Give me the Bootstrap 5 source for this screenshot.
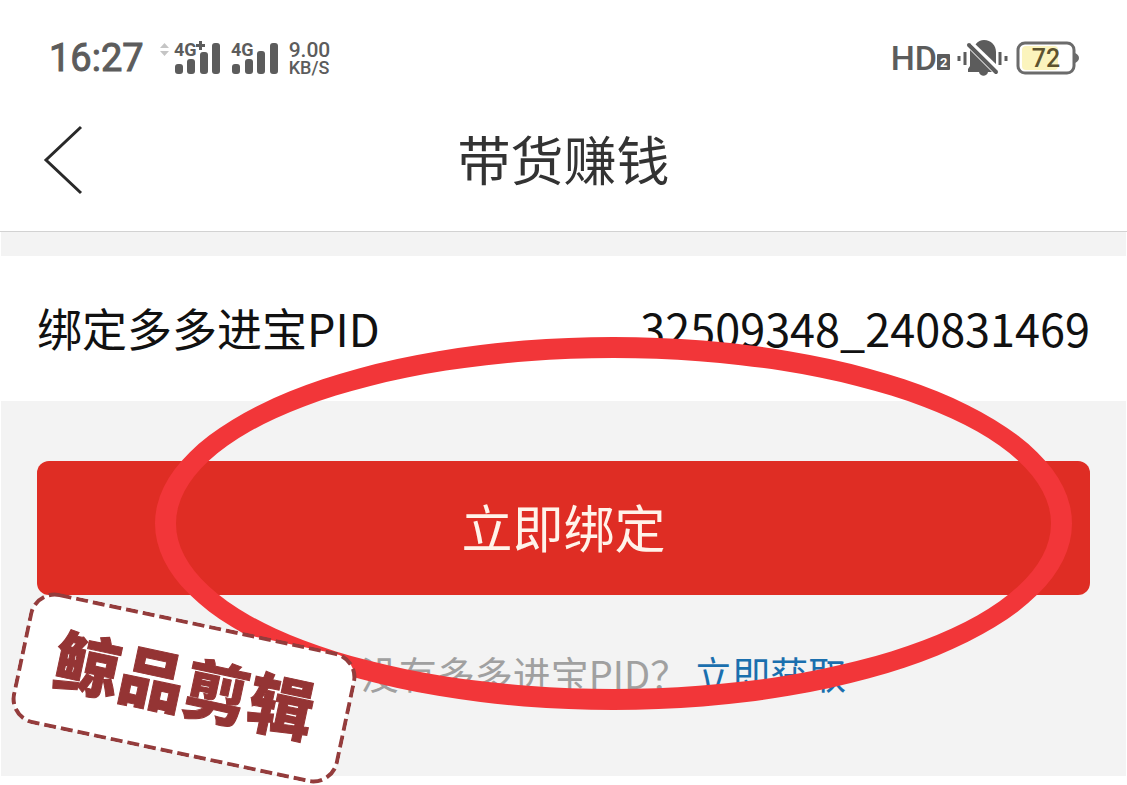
<!DOCTYPE html>
<html lang="zh-CN">
<head>
<meta charset="utf-8">
<meta name="viewport" content="width=device-width, initial-scale=1">
<title>带货赚钱</title>
<link href="https://cdn.jsdelivr.net/npm/bootstrap@5.3.0/dist/css/bootstrap.min.css" rel="stylesheet">
<style>
  body { font-family: "Noto Sans CJK SC", sans-serif; background: #fff; color: #111; }
  .status-bar { font-family: Roboto, sans-serif; color: #5c5c5c; height: 112px; padding: 4px 48px 0 49px; }
  .status-bar svg { overflow: visible; }
  .clock { font-size: 38px; line-height: 44px; -webkit-text-stroke: 1px #5c5c5c; }
  .rate-num { font-size: 21px; line-height: 20px; font-weight: 500; }
  .rate-unit { font-size: 18px; line-height: 16px; font-weight: 500; }
  .hd { font-size: 34px; line-height: 44px; font-weight: 500; }
  .title-bar { height: 120px; padding: 0 40px 24px; border-bottom: 1px solid #d2d2d2; }
  .title-bar h1 { font-size: 53px; line-height: 72px; font-weight: 400; color: #333; padding-bottom: 4px; }
  .back { width: 80px; }
  .sheet { background: #f3f3f3; padding-top: 24px; margin: 0 1px; height: 544px; }
  .pid-row { background: #fff; height: 145px; padding: 0 36px 2px; font-size: 45px; line-height: 60px; }
  .bind-area { padding: 60px 36px 0; }
  .bind-btn { height: 134px; font-size: 51px; padding: 0 0 4px; font-weight: 400; color: #fff3ea; border-radius: 12px; --bs-btn-bg: #df2d24; --bs-btn-hover-bg: #cb261e; --bs-btn-border-width: 0; }
  .hint { font-size: 38px; line-height: 56px; margin-top: 50px; color: #a0a0a0; padding-left: 80px; }
  .hint a { color: #1a6fae; margin-left: 6px; }
  .ring { left: 13.7%; right: 4.8%; top: 105px; height: 373px; border: 21px solid #f23639; border-radius: 50%; pointer-events: none; }
  .stamp { left: 16px; top: 389px; width: 334px; height: 134px; padding-bottom: 12px; transform: rotate(12deg); color: #943434; font-size: 66px; line-height: 80px; font-weight: 900; }
  .stamp span { -webkit-text-stroke: 1px #943434; }
  .stamp svg { inset: 0; }
</style>
</head>
<body class="min-vh-100">
<header>
  <div class="status-bar d-flex align-items-center justify-content-between">
    <div class="d-flex align-items-center">
      <span class="clock">16:27</span>
      <svg class="ms-3 mb-3" width="9" height="14" viewBox="0 0 9 14" aria-hidden="true"><path d="M0 5 4.500 0 9 5ZM0 8H9L4.500 13Z" fill="#c5c5c5"/></svg>
      <svg class="ms-1" width="50" height="36" viewBox="0 0 50 36" fill="#5c5c5c" aria-label="4G+">
        <text x="1" y="16" font-size="18" font-weight="700">4G</text><path d="M26 1h3v3h3v3h-3v3h-3V7h-3V4h3z"/>
        <rect x="2" y="24" width="8" height="10" rx="3"/><rect x="14" y="19" width="8" height="15" rx="3"/><rect x="27" y="12" width="8" height="22" rx="3"/><rect x="39" y="3" width="8" height="31" rx="3"/>
      </svg>
      <svg class="ms-2" width="50" height="36" viewBox="0 0 50 36" fill="#5c5c5c" aria-label="4G">
        <text x="0" y="16" font-size="18" font-weight="700">4G</text>
        <rect x="1" y="24" width="8" height="10" rx="3"/><rect x="14" y="19" width="8" height="15" rx="3"/><rect x="26" y="11" width="8" height="23" rx="3"/><rect x="39" y="3" width="8" height="31" rx="3"/>
      </svg>
      <div class="ms-2"><div class="rate-num">9.00</div><div class="rate-unit">KB/S</div></div>
    </div>
    <div class="d-flex align-items-center">
      <span class="hd">HD</span>
      <svg width="13" height="16" viewBox="0 0 13 16" class="mt-2" aria-hidden="true"><rect width="13" height="16" rx="1" fill="#5c5c5c"/><text x="3" y="13" font-size="13" font-weight="700" fill="#fff">2</text></svg>
      <svg class="ms-2" width="50" height="38" viewBox="0 0 50 38" fill="#5c5c5c" aria-label="静音">
        <path d="M17 6C20 2 23 1 26 1c7 0 12 5 12 12v14ZM12 11 34 33H30c-1 5-8 5-9 0H10V30l2-3Z"/>
        <path d="m11 6 27 27" fill="none" stroke="#5c5c5c" stroke-width="4" stroke-linecap="round"/>
        <path d="m14 4 26 25" fill="none" stroke="#fff" stroke-width="3"/>
        <path d="M1 17v5M7 13v13M42 13v13M48 17v5" fill="none" stroke="#5c5c5c" stroke-width="3"/>
      </svg>
      <svg class="ms-2" width="63" height="34" viewBox="0 0 63 34" aria-label="72%"><rect x="2" y="2" width="56" height="30" rx="7" fill="#fff" stroke="#6b6b6b" stroke-width="3"/><rect x="6" y="5" width="36" height="24" rx="4" fill="#fbf4bd"/><path d="M59 12q4 2 4 5t-4 5z" fill="#6b6b6b"/><text x="30" y="26" text-anchor="middle" font-size="25" font-weight="500" fill="#5d532f">72</text></svg>
    </div>
  </div>
  <div class="title-bar d-flex align-items-center justify-content-between">
    <button type="button" class="back btn p-0 border-0 text-start" aria-label="返回"><svg width="48" height="72" viewBox="0 0 48 72"><path d="M41 3 6 36 41 69" fill="none" stroke="#292929" stroke-width="3"/></svg></button>
    <h1 class="m-0">带货赚钱</h1>
    <span class="back"></span>
  </div>
</header>
<main class="sheet position-relative">
  <div class="pid-row d-flex align-items-center justify-content-between"><span>绑定多多进宝PID</span><span>32509348_240831469</span></div>
  <div class="bind-area">
    <button type="button" class="bind-btn btn w-100">立即绑定</button>
    <p class="hint text-center mb-0">没有多多进宝PID？<a href="#" class="text-decoration-none">立即获取</a></p>
  </div>
  <div class="ring position-absolute"></div>
  <div class="stamp position-absolute d-flex align-items-center justify-content-center">
    <svg class="position-absolute" width="334" height="134" viewBox="0 0 334 134" aria-hidden="true"><rect x="2" y="2" width="330" height="130" rx="24" fill="#fff" stroke="#943c3c" stroke-width="4" stroke-dasharray="12 5"/></svg>
    <span class="position-relative">鲸品剪辑</span>
  </div>
</main>
<script src="https://cdn.jsdelivr.net/npm/bootstrap@5.3.0/dist/js/bootstrap.bundle.min.js"></script>
</body>
</html>
